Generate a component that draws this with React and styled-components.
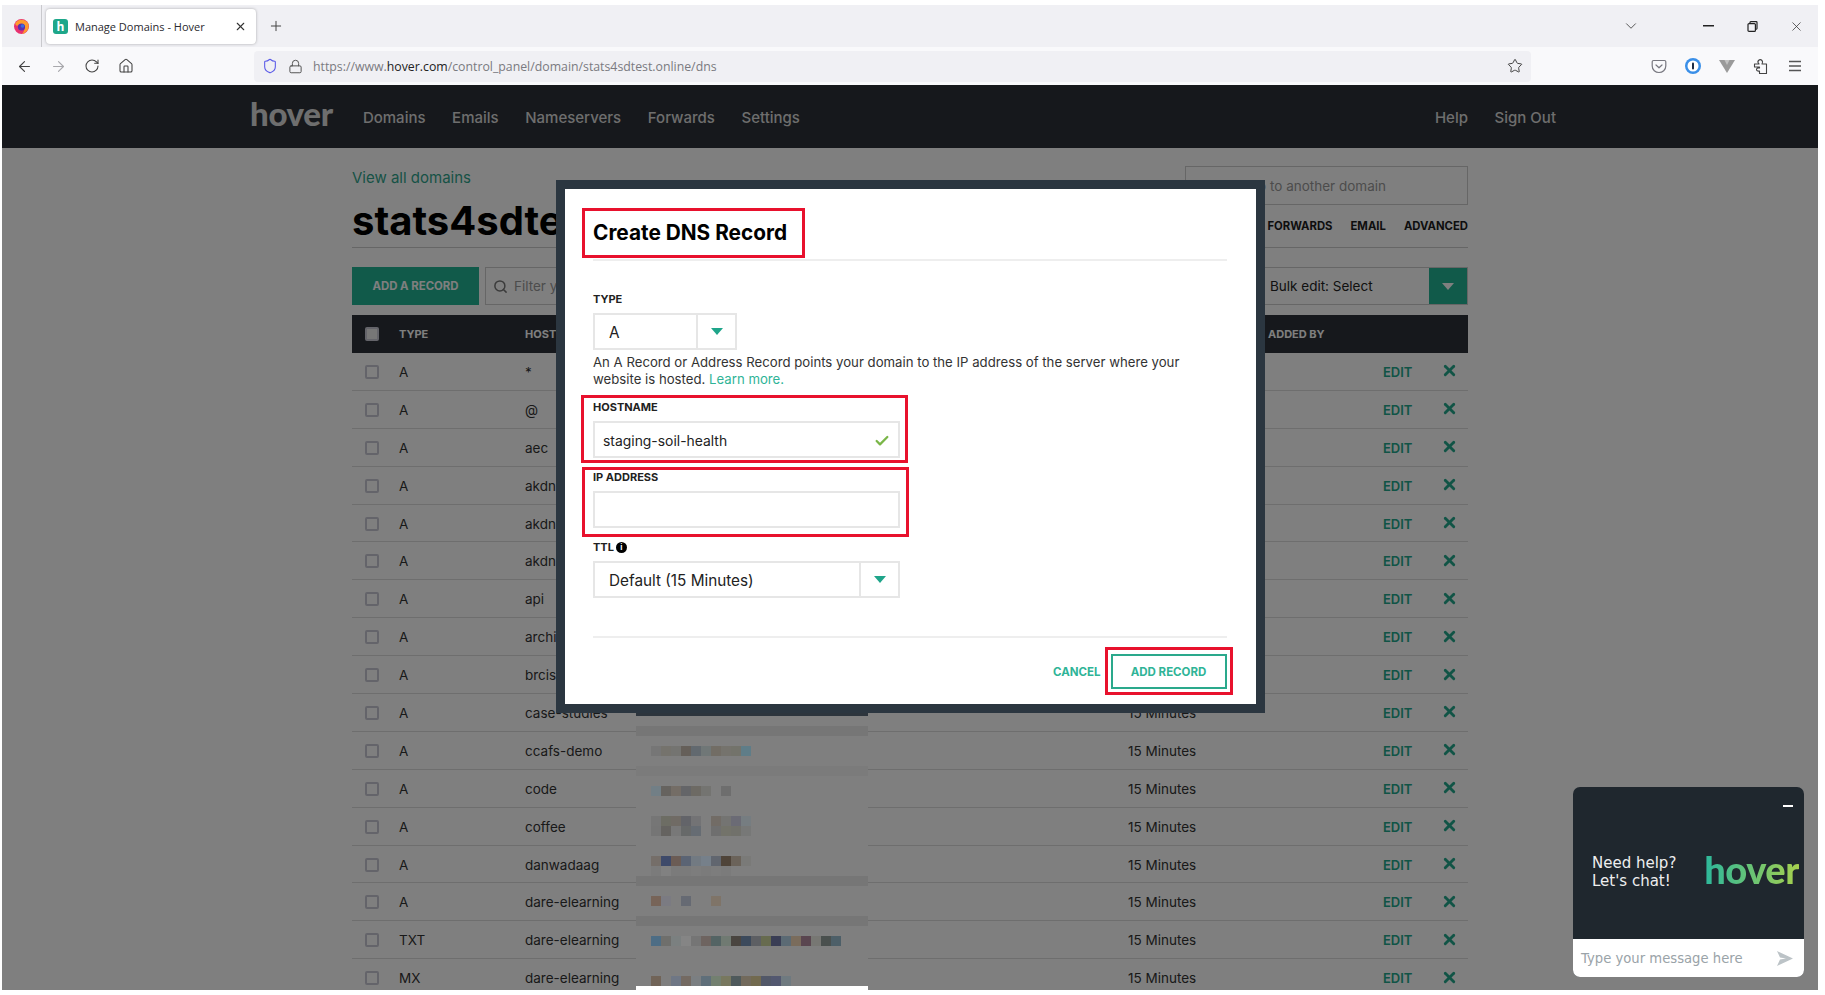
import React from "react";
import styled, { createGlobalStyle } from "styled-components";
import {
  ArrowLeft,
  ArrowRight,
  Check,
  ChevronDown,
  Home,
  Lock,
  Plus,
  RotateCw,
  Search,
  Shield,
  Star,
  X,
} from "lucide-react";

const GlobalStyle = createGlobalStyle`
  html, body {
    margin: 0;
    padding: 0;
    background: #fff;
    overflow: hidden;
  }
  * {
    box-sizing: border-box;
  }
`;

const Frame = styled.div`
  width: 1825px;
  height: 995px;
  padding: 5px 7px 5px 2px;
  font-family: Inter, "Liberation Sans", sans-serif;
  display: flex;
  flex-direction: column;
`;

/* browser chrome */
const TabStrip = styled.div`
  height: 42px;
  background: #f0f0f4;
  display: flex;
  align-items: center;
  flex-shrink: 0;
`;

const FoxSlot = styled.div`
  width: 40px;
  height: 100%;
  border-right: 1px solid #c9c9cd;
  display: flex;
  align-items: center;
  justify-content: center;
`;

const Tab = styled.div`
  margin-left: 4px;
  width: 210px;
  height: 35px;
  background: #fff;
  border-radius: 4px;
  box-shadow: 0 0 3px rgba(0, 0, 0, 0.3);
  display: flex;
  align-items: center;
  padding: 0 9px 0 7px;
`;

const Favicon = styled.div`
  width: 15px;
  height: 15px;
  border-radius: 3px;
  background: #1ea78a;
  color: #fff;
  font: 700 12px/15px "Open Sans", sans-serif;
  text-align: center;
`;

const TabTitle = styled.span`
  margin-left: 7px;
  flex: 1;
  font: 400 11px "Open Sans", sans-serif;
  color: #2a2a2e;
  white-space: nowrap;
`;

const NewTab = styled.div`
  margin-left: 12px;
  display: flex;
  color: #444;
`;

const WindowControls = styled.div`
  margin-left: auto;
  display: flex;
  align-items: center;
  color: #333;
`;

const TabList = styled.div`
  display: flex;
  margin-right: 46px;
  color: #555;
`;

const WinButton = styled.div`
  width: 44px;
  height: 20px;
  display: flex;
  align-items: center;
  justify-content: center;
`;

const Toolbar = styled.div`
  height: 38px;
  background: #f9f9fb;
  display: flex;
  align-items: center;
  padding-left: 14px;
  flex-shrink: 0;
`;

const NavButton = styled.div`
  width: 34px;
  display: flex;
  color: ${(p) => (p.$off ? "#a8a8ac" : "#444")};
`;

const UrlBar = styled.div`
  margin-left: 102px;
  width: 1277px;
  height: 31px;
  background: #f0f0f4;
  border-radius: 4px;
  display: flex;
  align-items: center;
  padding: 0 8px 0 8px;
`;

const ShieldSlot = styled.div`
  display: flex;
  color: #5a5ae8;
`;

const LockSlot = styled.div`
  display: flex;
  margin-left: 10px;
  color: #555;
`;

const UrlText = styled.span`
  margin-left: 10px;
  flex: 1;
  font: 400 12.3px "Open Sans", sans-serif;
  color: #7a7a80;
  b {
    font-weight: 400;
    color: #222;
  }
`;

const StarSlot = styled.div`
  display: flex;
  color: #444;
`;

const Extensions = styled.div`
  display: flex;
  align-items: center;
  margin-left: 119px;
  gap: 16px;
  color: #555;
`;

const ExtSlot = styled.div`
  width: 18px;
  height: 18px;
  display: flex;
  align-items: center;
  justify-content: center;
`;

/* page behind the dialog */
const Page = styled.div`
  position: relative;
  flex: 1;
  overflow: hidden;
  background: #fff;
`;

const Dim = styled.div`
  position: absolute;
  inset: 0;
  background: rgba(0, 0, 0, 0.5);
`;

const TopNav = styled.div`
  height: 63px;
  background: #2c3138;
  display: flex;
  align-items: center;
  padding: 0 262px 0 249px;
`;

const Logo = styled.div`
  font: 900 33px/1 Lato, sans-serif;
  color: #dcdcdc;
  letter-spacing: -0.3px;
  margin: -7px 30px 0 -1px;
`;

const NavLinks = styled.div`
  display: flex;
  gap: 26.6px;
  padding-top: 1px;
  ${(p) => p.$end && "margin-left: auto;"}
`;

const NavLink = styled.span`
  font-size: 15px;
  font-weight: 500;
  color: #dcdcdc;
`;

const Content = styled.div`
  margin-left: 350px;
  width: 1116px;
  padding-top: 19px;
`;

const TitleBlock = styled.div`
  height: 81px;
  border-bottom: 1px solid #ccc;
  display: flex;
  justify-content: space-between;
`;

const BackLink = styled.a`
  display: block;
  font-size: 15px;
  line-height: 22px;
  color: #2fa58c;
`;

const DomainTitle = styled.h1`
  margin: 8px 0 0;
  font-size: 40px;
  line-height: 48px;
  font-weight: 700;
  color: #000;
`;

const TitleRight = styled.div`
  display: flex;
  flex-direction: column;
  align-items: flex-end;
`;

const DomainJump = styled.div`
  width: 283px;
  height: 39px;
  margin-top: -1px;
  border: 1px solid #ccc;
  background: #fff;
  padding-left: 62px;
  font-size: 13.5px;
  line-height: 39px;
  color: #999;
`;

const SubTabs = styled.div`
  display: flex;
  gap: 18px;
  margin-top: 14px;
`;

const SubTab = styled.span`
  font-size: 11.3px;
  line-height: 15px;
  font-weight: 700;
  color: #1c1c1c;
`;

const Actions = styled.div`
  margin-top: 19px;
  height: 38px;
  display: flex;
  gap: 6px;
`;

const AddButton = styled.div`
  width: 127px;
  background: #22b494;
  color: #fff;
  font-size: 11.4px;
  font-weight: 700;
  display: flex;
  align-items: center;
  justify-content: center;
`;

const FilterBox = styled.div`
  flex: 1;
  border: 1px solid #ccc;
  display: flex;
  align-items: center;
  padding-left: 7px;
  gap: 6px;
  font-size: 13.5px;
  color: #999;
`;

const BulkBox = styled.div`
  width: 217px;
  border: 1px solid #ccc;
  display: flex;
  align-items: center;
  justify-content: space-between;
  padding-left: 18px;
  font-size: 13.5px;
  color: #222;
`;

const BulkCaret = styled.div`
  width: 38px;
  height: 100%;
  background: #22b494;
  display: flex;
  align-items: center;
  justify-content: center;
`;

const Caret = styled.i`
  width: 0;
  height: 0;
  border-left: 6px solid transparent;
  border-right: 6px solid transparent;
  border-top: 7px solid ${(p) => p.$color};
`;

const Columns = "47px 126px 111px 492px 140px 115px 1fr";

const HeadRow = styled.div`
  margin-top: 10px;
  height: 38px;
  background: #2c3138;
  display: grid;
  grid-template-columns: ${Columns};
  align-items: center;
  font-size: 11px;
  font-weight: 700;
  color: #fff;
`;

const Row = styled.div`
  height: 37.9px;
  padding-top: 1px;
  display: grid;
  grid-template-columns: ${Columns};
  align-items: center;
  border-bottom: 1px solid #ddd;
  font-size: 13.5px;
  color: #333;
`;

const Box = styled.span`
  display: block;
  margin-left: 13px;
  width: 14px;
  height: 14px;
  border: 2px solid #c9c9d4;
  border-radius: 2px;
  background: ${(p) => (p.$filled ? "#eee" : "transparent")};
`;

const RowActions = styled.div`
  display: flex;
  align-items: center;
  gap: 29px;
  color: #22a88c;
  font-size: 13px;
  font-weight: 600;
`;

const RemoveIcon = styled(X)`
  margin-top: -2px;
`;

/* pixelated censor patch pasted over the value column */
const Patch = styled.div`
  position: absolute;
  left: 634px;
  top: 621px;
  width: 232px;
  height: 284px;
  background: #7f7f7f;
  border-bottom: 4px solid #fff;
`;

const PatchLine = styled.div`
  height: 10px;
  display: flex;
  padding-left: ${(p) => (p.$band ? 0 : 15)}px;
  background: ${(p) => p.$band || "transparent"};
`;

const PatchCell = styled.span`
  width: 10px;
  height: 10px;
  background: ${(p) => p.$color || "transparent"};
`;

/* dialog */
const Dialog = styled.div`
  position: absolute;
  left: 553.5px;
  top: 95px;
  width: 709px;
  height: 533px;
  border: 9px solid #2b3640;
  background: #fff;
  padding: 19px 29px 0 28.5px;
  color: #222;
`;

const Marked = styled.div`
  border: 3px solid #e8112d;
  margin-left: ${(p) => p.$left}px;
  margin-top: ${(p) => p.$top}px;
  width: ${(p) => p.$width}px;
  height: ${(p) => p.$height}px;
  padding: ${(p) => p.$pad};
`;

const DialogTitle = styled.h2`
  margin: 0;
  font-size: 20.8px;
  line-height: 44px;
  font-weight: 700;
  color: #000;
`;

const Rule = styled.div`
  height: 2px;
  background: #eee;
  margin-top: ${(p) => p.$top}px;
`;

const Label = styled.div`
  font-size: 11px;
  line-height: 14px;
  font-weight: 700;
  color: #222;
  margin-top: ${(p) => p.$top || 0}px;
  display: flex;
  align-items: center;
  gap: 2px;
`;

const SelectBox = styled.div`
  width: ${(p) => p.$width}px;
  height: 37px;
  margin-top: ${(p) => p.$top}px;
  border: 2px solid #e6e6e6;
  display: flex;
  align-items: center;
  font-size: 15.3px;
  color: #222;
`;

const SelectValue = styled.div`
  flex: 1;
  padding: 2px 0 0 14px;
`;

const SelectCaret = styled.div`
  width: ${(p) => p.$width}px;
  height: 100%;
  border-left: 2px solid #e6e6e6;
  display: flex;
  align-items: center;
  justify-content: center;
`;

const Help = styled.p`
  margin: 4px 0 0;
  font-size: 13.2px;
  line-height: 17px;
  color: #333;
  a {
    color: #2fb497;
  }
`;

const TextBox = styled.div`
  width: ${(p) => p.$width}px;
  height: 37px;
  margin-top: 7px;
  border: 2px solid #e6e6e6;
  display: flex;
  align-items: center;
  justify-content: space-between;
  padding: 2px 8px 0;
  font-size: 13.9px;
  color: #222;
`;

const InfoDot = styled.span`
  width: 11px;
  height: 11px;
  border-radius: 50%;
  background: #000;
  color: #fff;
  font-size: 8px;
  line-height: 11px;
  font-weight: 700;
  text-align: center;
`;

const DialogFooter = styled.div`
  display: flex;
  justify-content: flex-end;
  align-items: flex-start;
  margin-right: -6px;
`;

const CancelLink = styled.span`
  margin: 27px 4px 0 0;
  font-size: 11.5px;
  line-height: 14px;
  font-weight: 700;
  color: #2fb497;
`;

const OutlineButton = styled.div`
  width: 116px;
  height: 35px;
  border: 2px solid #2aa98c;
  font-size: 11.5px;
  font-weight: 700;
  color: #2fb497;
  display: flex;
  align-items: center;
  justify-content: center;
`;

/* chat widget */
const Chat = styled.div`
  position: absolute;
  right: 14px;
  bottom: 13px;
  width: 231px;
  height: 190px;
  border-radius: 7px;
  overflow: hidden;
  background: #1f272e;
  display: flex;
  flex-direction: column;
`;

const ChatBody = styled.div`
  position: relative;
  flex: 1;
  display: flex;
  align-items: center;
  padding: 17px 5px 0 19px;
  justify-content: space-between;
`;

const ChatMin = styled.span`
  position: absolute;
  top: 18px;
  right: 11px;
  width: 10px;
  height: 2px;
  background: #fff;
`;

const ChatText = styled.div`
  font: 400 15px/18px "DejaVu Sans", sans-serif;
  color: #eee;
`;

const ChatLogo = styled.div`
  font: 900 38px/1 Lato, sans-serif;
  letter-spacing: -0.5px;
  margin-top: -6px;
  background: linear-gradient(90deg, #2cb89c, #a6d04e);
  -webkit-background-clip: text;
  background-clip: text;
  color: transparent;
`;

const ChatInput = styled.div`
  height: 38px;
  background: #fff;
  display: flex;
  align-items: center;
  justify-content: space-between;
  padding: 0 11px 0 8px;
  font: 400 13.2px "DejaVu Sans", sans-serif;
  color: #9aa3a8;
`;

const rows = [
  ["A", "*"],
  ["A", "@"],
  ["A", "aec"],
  ["A", "akdn-one"],
  ["A", "akdn-two"],
  ["A", "akdn-three"],
  ["A", "api"],
  ["A", "archive"],
  ["A", "brcis-demo"],
  ["A", "case-studies"],
  ["A", "ccafs-demo"],
  ["A", "code"],
  ["A", "coffee"],
  ["A", "danwadaag"],
  ["A", "dare-elearning"],
  ["TXT", "dare-elearning"],
  ["MX", "dare-elearning"],
];

const _ = null;
const patchLines = [
  { band: "#2d353d" },
  {},
  { band: "#767676" },
  {},
  { cells: ["#767676", "#75736d", "#747471", "#655f59", "#62696f", "#707777", "#726d65", "#75736d", "#73736b", "#5f7d88"] },
  {},
  { band: "#7b7b7b" },
  {},
  { cells: ["#727f86", "#66635f", "#746d66", "#646568", "#6d6a64", "#747471", _, "#6e6e6e"] },
  {},
  {},
  { cells: ["#767676", "#6d6d64", "#706b65", "#636469", "#737375", _, "#726c66", "#747472", "#6b6b75", "#767d81"] },
  { cells: ["#757575", "#656360", "#787878", "#676969", "#666c73", _, "#6f6f6f", "#73736a", "#71716b", "#777877"] },
  {},
  {},
  { cells: ["#756e69", "#3e4a6a", "#6b5c55", "#5b6474", "#727a82", "#76808a", "#61666f", "#4f4439", "#6b635a", "#7a7a78"] },
  { cells: ["#7b7b7b", "#818181", "#7b7b7b", "#7b7b7b", "#7d7d7d", "#7b7b7b", "#7d7d7d", "#7b7b7b"] },
  { band: "#767676" },
  {},
  { cells: ["#776458", "#7b7b82", _, "#666a73", _, _, "#7f7468"] },
  {},
  { band: "#767676" },
  {},
  { cells: ["#4d6d85", "#6f6f6c", "#7b8080", "#858585", "#757575", "#6e6460", "#546464", "#707a72", "#4a4540", "#3c4a5c", "#5d5f63", "#676b4f", "#3a3e55", "#5b6a74", "#7a6c5c", "#5a4650", "#777773", "#4a504e", "#4d5f68"] },
  {},
  {},
  {},
  { cells: ["#716458", _, "#6f7785", "#746a62", "#7b7f82", "#5f6f7a", "#738070", "#78785f", "#4f5a5c", "#726a5c", "#726a4f", "#525868", "#535870", "#6f7a80"] },
];

const FirefoxIcon = () => (
  <svg width="17" height="17" viewBox="0 0 17 17">
    <circle cx="8.5" cy="8.5" r="7.5" fill="#e8316f" />
    <path d="M2 6 C4 1 12 0 15.5 6 C16.5 10 14 15 9 16 C12 13 12 9 9 7 C7 6 5 6.5 4 8 Z" fill="#ff9a2e" />
    <circle cx="8.5" cy="9" r="3.6" fill="#5b2fb0" />
    <circle cx="9.5" cy="8" r="1.8" fill="#3a6fe0" />
  </svg>
);

const RestoreIcon = () => (
  <svg width="11" height="11" viewBox="0 0 11 11" fill="none" stroke="#222" strokeWidth="1.2">
    <rect x="1" y="2.6" width="7.4" height="7.8" rx="1" />
    <path d="M3 2.5 V1.5 Q3 .7 3.8 .7 H9.2 Q10 .7 10 1.5 V7.5 Q10 8.3 8.5 8.3" />
  </svg>
);

const PocketIcon = () => (
  <svg width="16" height="15" viewBox="0 0 16 15" fill="none" stroke="#77777f" strokeWidth="1.2">
    <path d="M2.5 1.5 H13.5 Q14.8 1.5 14.8 2.8 V7 C14.8 11 11.5 13.5 8 13.5 C4.5 13.5 1.2 11 1.2 7 V2.8 Q1.2 1.5 2.5 1.5 Z" />
    <path d="M5 6 L8 8.8 L11 6" strokeLinecap="round" strokeLinejoin="round" />
  </svg>
);

const OnePasswordIcon = () => (
  <svg width="18" height="18" viewBox="0 0 18 18">
    <circle cx="9" cy="9" r="8" fill="#3a8fe8" />
    <circle cx="9" cy="9" r="5.5" fill="#fff" />
    <rect x="8" y="5.5" width="2" height="7" rx="1" fill="#1a2a44" />
  </svg>
);

const VeeIcon = () => (
  <svg width="16" height="14" viewBox="0 0 16 14">
    <path d="M0 1 H16 L8 14 Z" fill="#9a9a9a" />
    <path d="M5.5 1 H10.5 L8 6 Z" fill="#c2c2c2" />
  </svg>
);

const ExtensionIcon = () => (
  <svg width="16" height="18" viewBox="0 0 16 18" fill="none" stroke="#444" strokeWidth="1.1" strokeLinejoin="round">
    <path d="M1.5 7 H6 C4.5 5.5 4.5 4.5 5.5 3.500 C6.500 2.500 8 2.500 9 3.500 C10 4.500 9.500 6 9 7 H13.500 V16.500 H6.500 V14 C4.500 14.500 3.500 13.500 3.500 12.500 C3.500 11.500 4.500 10.500 6.500 11 V10 H1.500 Z" />
  </svg>
);

const MenuIcon = () => (
  <svg width="14" height="12" viewBox="0 0 14 12" stroke="#555" strokeWidth="1.5">
    <path d="M1 1.5 H13 M1 6 H13 M1 10.5 H13" />
  </svg>
);

const SendIcon = () => (
  <svg width="16" height="15" viewBox="0 0 16 15">
    <path d="M0 0 L16 7.5 L0 15 L3 8.5 L9 7.5 L3 6.5 Z" fill="#bcc3c7" />
  </svg>
);

const App = () => {
  return (
    <Frame>
      <GlobalStyle />
      <TabStrip>
        <FoxSlot>
          <FirefoxIcon />
        </FoxSlot>
        <Tab>
          <Favicon>h</Favicon>
          <TabTitle>Manage Domains - Hover</TabTitle>
          <X size={13} color="#333" />
        </Tab>
        <NewTab>
          <Plus size={16} strokeWidth={1.5} />
        </NewTab>
        <WindowControls>
          <TabList>
            <ChevronDown size={18} strokeWidth={1.3} />
          </TabList>
          <WinButton>
            <svg width="11" height="2">
              <rect width="11" height="1.5" fill="#222" />
            </svg>
          </WinButton>
          <WinButton>
            <RestoreIcon />
          </WinButton>
          <WinButton>
            <X size={15} strokeWidth={1.2} />
          </WinButton>
        </WindowControls>
      </TabStrip>
      <Toolbar>
        <NavButton>
          <ArrowLeft size={17} strokeWidth={1.6} />
        </NavButton>
        <NavButton $off>
          <ArrowRight size={17} strokeWidth={1.6} />
        </NavButton>
        <NavButton>
          <RotateCw size={16} strokeWidth={1.6} />
        </NavButton>
        <NavButton>
          <Home size={16} strokeWidth={1.6} />
        </NavButton>
        <UrlBar>
          <ShieldSlot>
            <Shield size={16} strokeWidth={1.6} />
          </ShieldSlot>
          <LockSlot>
            <Lock size={15} strokeWidth={1.6} />
          </LockSlot>
          <UrlText>
            https://www.<b>hover.com</b>/control_panel/domain/stats4sdtest.online/dns
          </UrlText>
          <StarSlot>
            <Star size={16} strokeWidth={1.5} />
          </StarSlot>
        </UrlBar>
        <Extensions>
          <ExtSlot>
            <PocketIcon />
          </ExtSlot>
          <ExtSlot>
            <OnePasswordIcon />
          </ExtSlot>
          <ExtSlot>
            <VeeIcon />
          </ExtSlot>
          <ExtSlot>
            <ExtensionIcon />
          </ExtSlot>
          <ExtSlot>
            <MenuIcon />
          </ExtSlot>
        </Extensions>
      </Toolbar>

      <Page>
        <TopNav>
          <Logo>hover</Logo>
          <NavLinks>
            <NavLink>Domains</NavLink>
            <NavLink>Emails</NavLink>
            <NavLink>Nameservers</NavLink>
            <NavLink>Forwards</NavLink>
            <NavLink>Settings</NavLink>
          </NavLinks>
          <NavLinks $end>
            <NavLink>Help</NavLink>
            <NavLink>Sign Out</NavLink>
          </NavLinks>
        </TopNav>

        <Content>
          <TitleBlock>
            <div>
              <BackLink>View all domains</BackLink>
              <DomainTitle>stats4sdtest.online</DomainTitle>
            </div>
            <TitleRight>
              <DomainJump>Go to another domain</DomainJump>
              <SubTabs>
                <SubTab>FORWARDS</SubTab>
                <SubTab>EMAIL</SubTab>
                <SubTab>ADVANCED</SubTab>
              </SubTabs>
            </TitleRight>
          </TitleBlock>

          <Actions>
            <AddButton>ADD A RECORD</AddButton>
            <FilterBox>
              <Search size={15} strokeWidth={2.4} color="#777" />
              Filter your records
            </FilterBox>
            <BulkBox>
              Bulk edit: Select
              <BulkCaret>
                <Caret $color="#fff" />
              </BulkCaret>
            </BulkBox>
          </Actions>

          <HeadRow>
            <Box $filled />
            <span>TYPE</span>
            <span>HOST</span>
            <span>VALUE</span>
            <span>TTL</span>
            <span>ADDED BY</span>
            <span />
          </HeadRow>
          {rows.map(([type, host], i) => (
            <Row key={i}>
              <Box />
              <span>{type}</span>
              <span>{host}</span>
              <span />
              <span>15 Minutes</span>
              <span />
              <RowActions>
                EDIT
                <RemoveIcon size={17} strokeWidth={4} />
              </RowActions>
            </Row>
          ))}
        </Content>

        <Dim />

        <Patch>
          {patchLines.map((line, i) => (
            <PatchLine key={i} $band={line.band}>
              {(line.cells || []).map((color, k) => (
                <PatchCell key={k} $color={color} />
              ))}
            </PatchLine>
          ))}
        </Patch>

        <Dialog>
          <Marked $left={-11} $top={0} $width={223} $height={50} $pad="0 0 0 8px">
            <DialogTitle>Create DNS Record</DialogTitle>
          </Marked>
          <Rule $top={1} />

          <Label $top={31}>TYPE</Label>
          <SelectBox $width={144} $top={7}>
            <SelectValue>A</SelectValue>
            <SelectCaret $width={39}>
              <Caret $color="#1fa58a" />
            </SelectCaret>
          </SelectBox>
          <Help>
            An A Record or Address Record points your domain to the IP address of the server where your
            <br />
            website is hosted. <a>Learn more.</a>
          </Help>

          <Marked $left={-12} $top={7} $width={327} $height={68} $pad="2px 0 0 9px">
            <Label>HOSTNAME</Label>
            <TextBox $width={307}>
              staging-soil-health
              <Check size={16} strokeWidth={3.4} color="#7ab648" />
            </TextBox>
          </Marked>

          <Marked $left={-11} $top={4} $width={327} $height={70} $pad="0 0 0 8px">
            <Label>IP ADDRESS</Label>
            <TextBox $width={307} />
          </Marked>

          <Label $top={3}>
            TTL <InfoDot>i</InfoDot>
          </Label>
          <SelectBox $width={307} $top={7}>
            <SelectValue>Default (15 Minutes)</SelectValue>
            <SelectCaret $width={39}>
              <Caret $color="#1fa58a" />
            </SelectCaret>
          </SelectBox>

          <Rule $top={38} />
          <DialogFooter>
            <CancelLink>CANCEL</CancelLink>
            <Marked $left={0} $top={9} $width={128} $height={48} $pad="4px 0 0 3px">
              <OutlineButton>ADD RECORD</OutlineButton>
            </Marked>
          </DialogFooter>
        </Dialog>

        <Chat>
          <ChatBody>
            <ChatMin />
            <ChatText>
              Need help?
              <br />
              Let's chat!
            </ChatText>
            <ChatLogo>hover</ChatLogo>
          </ChatBody>
          <ChatInput>
            Type your message here
            <SendIcon />
          </ChatInput>
        </Chat>
      </Page>
    </Frame>
  );
};

export default App;
